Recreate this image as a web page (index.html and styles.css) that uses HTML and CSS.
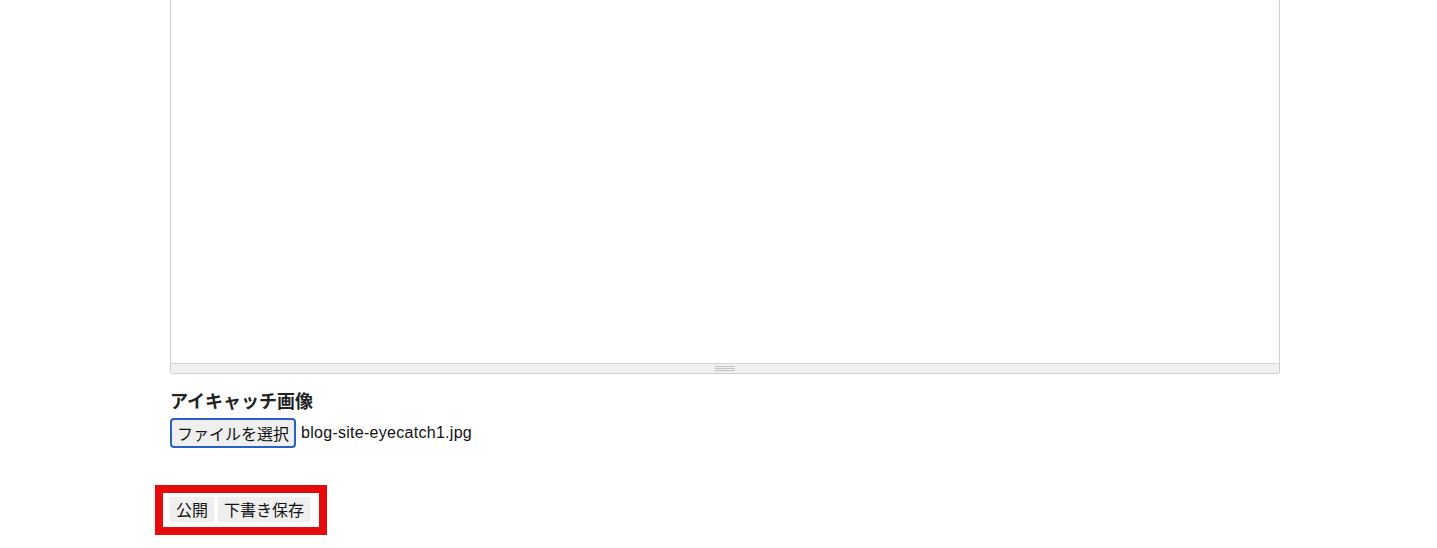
FILE: index.html
```html
<!DOCTYPE html>
<html lang="ja">
<head>
<meta charset="utf-8">
<title>投稿</title>
<link rel="stylesheet" href="styles.css">
</head>
<body>
<div class="page">
  <div class="editor">
    <div class="editor-body"></div>
    <div class="statusbar"><span class="grip"></span></div>
  </div>
  <h3 class="label">アイキャッチ画像</h3>
  <div class="file-row">
    <span class="file-btn">ファイルを選択</span>
    <span class="file-name">blog-site-eyecatch1.jpg</span>
  </div>
  <div class="actions">
    <button class="btn" type="button">公開</button>
    <button class="btn" type="button">下書き保存</button>
  </div>
</div>
</body>
</html>
```

FILE: styles.css
```css
html, body {
  margin: 0;
  padding: 0;
  background: #ffffff;
}
body {
  font-family: "Liberation Sans", "Noto Sans CJK JP", sans-serif;
  color: #1a1a1a;
}
.page {
  width: 1110px;
  margin-left: 170px;
  display: flex;
  flex-direction: column;
  align-items: flex-start;
}
.editor {
  width: 1108px;
  border: 1px solid #cfcfcf;
  border-top: none;
  border-radius: 0 0 3px 3px;
  display: flex;
  flex-direction: column;
}
.editor-body {
  height: 363px;
  background: #ffffff;
}
.statusbar {
  height: 9px;
  border-top: 1px solid #d4d4d4;
  background: #f1f1f1;
  display: flex;
  justify-content: center;
  align-items: center;
  border-radius: 0 0 3px 3px;
}
.grip {
  width: 20px;
  height: 5px;
  background: repeating-linear-gradient(to bottom, #c4c4c4 0 1px, transparent 1px 2px);
}
.label {
  margin: 13px 0 0 0;
  font-family: "Noto Sans CJK JP", sans-serif;
  font-size: 18px;
  line-height: 26px;
  font-weight: 700;
  color: #222222;
}
.file-row {
  margin-top: 5px;
  display: flex;
  align-items: center;
  gap: 5px;
}
.file-btn {
  box-sizing: border-box;
  height: 30px;
  padding: 0 5px;
  border: 2px solid #2a5fc4;
  border-radius: 4px;
  background: #efefef;
  font-family: "Noto Sans CJK JP", sans-serif;
  font-size: 16px;
  line-height: 26px;
  color: #111111;
  display: flex;
  align-items: center;
}
.file-name {
  font-family: "Liberation Sans", sans-serif;
  font-size: 16px;
  letter-spacing: 0.28px;
  color: #111111;
}
.actions {
  margin: 37px 0 0 -15px;
  border: 8px solid #e60b0b;
  padding: 4px 9px 5px 7px;
  display: flex;
  gap: 4px;
}
.btn {
  border: none;
  border-radius: 0;
  background: #efefef;
  padding: 3px 6px;
  margin: 0;
  font-family: "Noto Sans CJK JP", sans-serif;
  font-size: 16px;
  line-height: 19px;
  color: #111111;
}
```
